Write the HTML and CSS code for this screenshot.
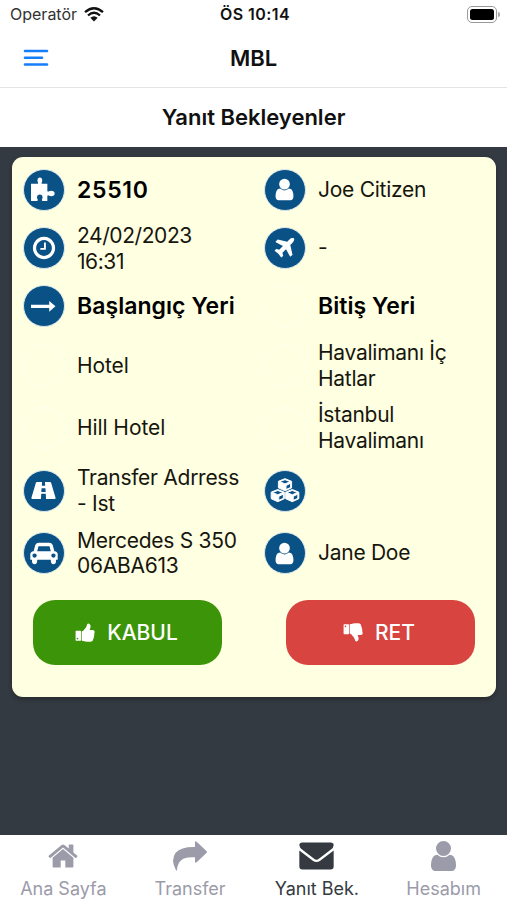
FILE: index.html
```html
<!DOCTYPE html>
<html lang="tr">
<head>
<meta charset="utf-8">
<title>MBL</title>
<link rel="stylesheet" href="styles.css">
</head>
<body>
<svg class="defs" width="0" height="0">
  <symbol id="user" viewBox="0 0 1792 1792"><path d="M1536 1399q0 109-62.500 187t-150.500 78h-854q-88 0-150.500-78t-62.500-187q0-85 8.500-160.500t31.500-152 58.500-131 94-89 134.500-34.500q131 128 313 128t313-128q76 0 134.500 34.500t94 89 58.500 131 31.500 152 8.500 160.500zm-256-887q0 159-112.500 271.500t-271.500 112.500-271.500-112.500-112.500-271.500 112.500-271.500 271.500-112.500 271.500 112.500 112.500 271.500z"/></symbol>
  <symbol id="thumb" viewBox="0 0 60 58"><path fill-rule="evenodd" d="M3 24h13q2 0 2 2v26q0 2-2 2H3q-2 0-2-2V26q0-2 2-2zM7 45a2.500 2.500 0 1 0 0 5 2.500 2.500 0 0 0 0-5zM20 26q5-1 9-8 5-5 6-9l2-6q3-3 7 0 4 3 3 9-1 5-3 9h10q6 1 6 6 0 4-2 6 2 5-1 8 1 5-2 7 0 9-9 9h-9q-7 0-12-2l-5-1z"/></symbol>
</svg>
<header class="status">
  <div class="carrier"><span class="t-carrier">Operatör</span>
    <svg class="wifi" viewBox="0 0 60 44"><g fill="none" stroke="#111" stroke-width="7"><path d="M3 15Q30-9 57 15"/><path d="M12 25Q30 9 48 25"/></g><path fill="#111" d="M19 32q11-9 22 0L30 43z"/></svg>
  </div>
  <div class="clock">ÖS 10:14</div>
  <div class="battery"><i class="shell"><i class="charge"></i></i><i class="nub"></i></div>
</header>
<nav class="navbar"><svg class="menu" viewBox="0 0 25 18"><path d="M1.500 2h22M1.500 8.800h17M1.500 15.500h22"/></svg><h1 class="brand">MBL</h1></nav>
<h2 class="heading"><span>Yanıt Bekleyenler</span></h2>
<main class="content">
  <section class="card">
    <div class="details">
      <div class="cell"><i class="dot"><svg viewBox="0 0 24 24"><path d="M0 6.500h6.500c1-.7-.3-1.500-.3-3.200C6.200 1.500 7.200.5 8.500.5s2.300 1 2.300 2.800c0 1.700-1.400 2.500-.3 3.200h5.200v7c.6 1.300 1.600-.3 3.700-.3 2.200 0 3.300 1 3.300 2.600s-1.100 2.700-3.300 2.700c-2 0-3-1.800-3.700-.4v5h-4.800c-1.200-1 .2-1.800.2-3.600 0-1.700-1-2.700-2.600-2.700S5.800 17.800 5.800 19.500c0 1.800 1.600 2.600.2 3.600H0z"/></svg></i><span class="text strong t-id">25510</span></div>
      <div class="cell"><i class="dot"><svg viewBox="0 0 1792 1792"><use href="#user"/></svg></i><span class="text">Joe Citizen</span></div>

      <div class="cell"><i class="dot"><svg class="time" viewBox="0 0 1792 1792"><path d="M1024 544v448q0 14-9 23t-23 9h-320q-14 0-23-9t-9-23v-64q0-14 9-23t23-9h224v-352q0-14 9-23t23-9h64q14 0 23 9t9 23zm416 352q0-148-73-273t-198-198-273-73-273 73-198 198-73 273 73 273 198 198 273 73 273-73 198-198 73-273zm224 0q0 209-103 385.500t-279.500 279.500-385.500 103-385.500-103-279.500-279.500-103-385.500 103-385.500 279.500-279.500 385.500-103 385.500 103 279.500 279.500 103 385.500z"/></svg></i><span class="text t-date">24/02/2023<br>16:31</span></div>
      <div class="cell"><i class="dot"><svg viewBox="0 0 1792 1792"><path d="M1568 160q44 52 12 148t-108 172l-161 161 160 696q5 19-12 33l-128 96q-7 6-19 6-4 0-7-1-15-3-21-16l-279-508-259 259 53 194q5 17-8 31l-96 96q-9 9-23 9h-2q-15-2-24-13l-189-252-252-189q-11-7-13-23-1-13 9-25l96-97q9-9 23-9 6 0 8 1l194 53 259-259-508-279q-14-8-17-24-2-16 9-27l128-128q14-13 30-8l665 159 160-160q76-76 172-108t148 12z"/></svg></i><span class="text">-</span></div>

      <div class="cell"><i class="dot"><svg viewBox="0 0 24 24"><path d="M0 10.200h17.500V6.600l6 5.200-6 5.200v-3.600H0z"/></svg></i><span class="text strong">Başlangıç Yeri</span></div>
      <div class="cell"><i class="dot blank"></i><span class="text strong">Bitiş Yeri</span></div>

      <div class="cell"><i class="dot blank"></i><span class="text t-hotel">Hotel</span></div>
      <div class="cell"><i class="dot blank"></i><span class="text">Havalimanı İç<br>Hatlar</span></div>

      <div class="cell"><i class="dot blank"></i><span class="text t-hotel">Hill Hotel</span></div>
      <div class="cell"><i class="dot blank"></i><span class="text">İstanbul<br>Havalimanı</span></div>

      <div class="cell"><i class="dot"><svg class="wide" viewBox="0 0 26 20"><path fill-rule="evenodd" d="M6 1h5.500l-.3 4h3.600l-.3-4H20q.7 0 1 .8l4.700 15.700q.3 1.500-1 1.500h-9l-.3-5.500h-4.800L10.300 19h-9Q0 19 .3 17.500L5 1.800Q5.300 1 6 1zM11 7.500l-.3 4h4.600l-.3-4z"/></svg></i><span class="text t-address">Transfer Adrress<br>- Ist</span></div>
      <div class="cell"><i class="dot"><svg class="cubes" viewBox="0 0 90 76"><g stroke="#fff" stroke-width="3" stroke-linejoin="round"><path id="cube" fill-rule="evenodd" d="M45 2l20 8v20l-20 9-20-9V10zM29 11l16 7 16-7-16-6zM48 23v12l14-6V16z"/><use href="#cube" x="-22" y="33"/><use href="#cube" x="22" y="33"/></g></svg></i></div>

      <div class="cell"><i class="dot"><svg class="car" viewBox="0 0 2048 1792"><path d="M480 1088q0-66-47-113t-113-47-113 47-47 113 47 113 113 47 113-47 47-113zm36-320h1016l-89-357q-2-8-14-17.500t-21-9.500h-768q-9 0-21 9.500t-14 17.500zm1372 320q0-66-47-113t-113-47-113 47-47 113 47 113 113 47 113-47 47-113zm160-96v384q0 14-9 23t-23 9h-96v128q0 80-56 136t-136 56-136-56-56-136v-128h-1024v128q0 80-56 136t-136 56-136-56-56-136v-128h-96q-14 0-23-9t-9-23v-384q0-93 65.500-158.500t158.500-65.500h28l105-419q23-94 104-157.500t179-63.500h768q98 0 179 63.500t104 157.500l105 419h28q93 0 158.500 65.500t65.500 158.500z"/></svg></i><span class="text">Mercedes S 350<br>06ABA613</span></div>
      <div class="cell"><i class="dot"><svg viewBox="0 0 1792 1792"><use href="#user"/></svg></i><span class="text">Jane Doe</span></div>
    </div>
    <div class="actions">
      <button class="btn accept"><svg viewBox="0 0 60 58"><use href="#thumb"/></svg><span>KABUL</span></button>
      <button class="btn reject"><svg class="down" viewBox="0 0 60 58"><use href="#thumb"/></svg><span>RET</span></button>
    </div>
  </section>
</main>
<footer class="tabs">
  <a class="tab"><svg class="home" viewBox="64 200 1664 1336"><path d="M1472 992v480q0 26-19 45t-45 19h-384v-384h-256v384h-384q-26 0-45-19t-19-45v-480q0-1 .5-3t.5-3l575-474 575 474q1 2 1 6zm223-69l-62 74q-8 9-21 11h-3q-13 0-21-7l-692-577-692 577q-12 8-24 7-13-2-21-11l-62-74q-8-10-7-23.500t11-21.500l719-599q32-26 76-26t76 26l244 204v-195q0-14 9-23t23-9h192q14 0 23 9t9 23v408l219 182q10 8 11 21.500t-7 23.500z"/></svg><span class="t-home">Ana Sayfa</span></a>
  <a class="tab"><svg class="share" viewBox="0 0 102 90"><path d="M66 2q2-2 5 0l30 29q2 2 0 4L71 64q-5 3-5-2V49Q14 44 12 87q0 3-3 1Q-8 56 8 35 24 17 66 18z"/></svg><span>Transfer</span></a>
  <a class="tab active"><svg class="mail" viewBox="0 0 104 82"><path d="M10 1h84q9 0 9 8 0 8-10 14L59 49q-7 6-14 0L11 23Q1 16 1 9 1 1 10 1zM1 25l40 30q11 8 22 0l40-30v47q0 9-9 9H10q-9 0-9-9z"/></svg><span>Yanıt Bek.</span></a>
  <a class="tab"><svg class="person" viewBox="256 128 1280 1536"><use href="#user" width="1792" height="1792"/></svg><span>Hesabım</span></a>
</footer>
</body>
</html>
```
FILE: styles.css
```css
* { box-sizing: border-box; }
body { margin: 0; width: 507px; height: 900px; overflow: hidden; display: flex; flex-direction: column; background: #fff; color: #111; font-family: Inter, "Liberation Sans", sans-serif; }
.defs { position: absolute; }
svg { display: block; overflow: visible; }
h1, h2 { margin: 0; font-weight: 600; }
.status { height: 28px; display: grid; grid-template-columns: 1fr auto 1fr; align-items: center; padding: 0 7px 0 10px; font-size: 16px; }
.carrier { display: flex; align-items: center; gap: 7px; color: #333; }
.wifi { width: 20px; height: 15px; }
.clock { font-weight: 600; letter-spacing: .45px; }
.battery { justify-self: end; display: flex; align-items: center; gap: 1px; }
.shell { width: 30px; height: 17px; padding: 2px; border: 1px solid #999; border-radius: 5px; }
.nub { width: 2px; height: 5px; border-radius: 0 2px 2px 0; background: #aaa; }
.charge { display: block; height: 11px; border-radius: 2.500px; background: #000; }
.navbar { height: 60px; display: grid; grid-template-columns: 1fr auto 1fr; align-items: center; padding: 0 22.500px; border-bottom: 1px solid #e4e4e6; }
.menu { width: 26px; height: 18px; fill: none; stroke: #147efb; stroke-width: 2.600; stroke-linecap: round; }
.brand { font-size: 22px; line-height: 28px; }
.heading { height: 59px; padding-bottom: 2px; display: flex; align-items: center; justify-content: center; font-size: 22px; }
.content { height: 688px; padding: 10px 11px 0 11.500px; background: #343a41; }
.card { height: 540px; padding: 3px 0 0; border-radius: 11px; background: #ffffe1; box-shadow: 0 2px 5px rgba(0,0,0,.3); }
.details { display: grid; grid-template-columns: 241px 1fr; grid-template-rows: 59px 58px 58px 61px 63px 63px 62px; padding-left: 11px; }
.cell { display: flex; align-items: center; gap: 12.500px; }
.dot { flex: none; width: 42px; height: 42px; display: flex; align-items: center; justify-content: center; border: 1px solid #dbe8ea; border-radius: 50%; background: #0a5186; }
.dot.blank { border-color: #fffff0; background: transparent; }
.dot svg { width: 25px; height: 25px; fill: #fff; }
.dot svg.time { width: 26px; height: 26px; }
.dot svg.wide { width: 25px; height: 19px; }
.dot svg.cubes { width: 30px; height: 25px; }
.dot svg.car { width: 28px; height: 24px; }
.text { font-size: 21px; line-height: 25.500px; letter-spacing: -.27px; color: #16160f; white-space: nowrap; }
.t-date { letter-spacing: -.42px; padding-top: 1px; }
.t-hotel { letter-spacing: -.08px; }
.strong { padding-top: 2px; font-size: 23px; font-weight: 600; letter-spacing: .05px; color: #000; }
.t-id { letter-spacing: .7px; }
.actions { display: flex; justify-content: space-between; padding: 16px 21.500px 0; }
.btn { width: 189px; height: 65px; display: flex; align-items: center; justify-content: center; gap: 12px; padding: 0 8px 1px 6px; border: 0; border-radius: 22px; color: #fff; font: 500 21px Inter, sans-serif; }
.btn svg { width: 20px; height: 19px; fill: #fff; }
.btn svg.down { transform: scaleY(-1); }
.accept { background: #3c9408; }
.reject { background: #d84440; }
.tabs { height: 65px; display: grid; grid-template-columns: repeat(4, 1fr); background: #fff; }
.tab { display: grid; grid-template-rows: 31px 28px; place-items: center; align-content: start; padding-top: 5px; color: #9b9ba9; font-size: 18px; line-height: 28px; white-space: nowrap; }
.tab span { padding-top: 7px; }
.tab svg { fill: currentColor; }
.tab svg.home { width: 30px; height: 25px; }
.tab svg.share { width: 34px; height: 30px; }
.tab svg.mail { width: 35px; height: 28px; }
.tab svg.person { width: 25px; height: 30px; }
.tab.active { color: #343a40; }
```
